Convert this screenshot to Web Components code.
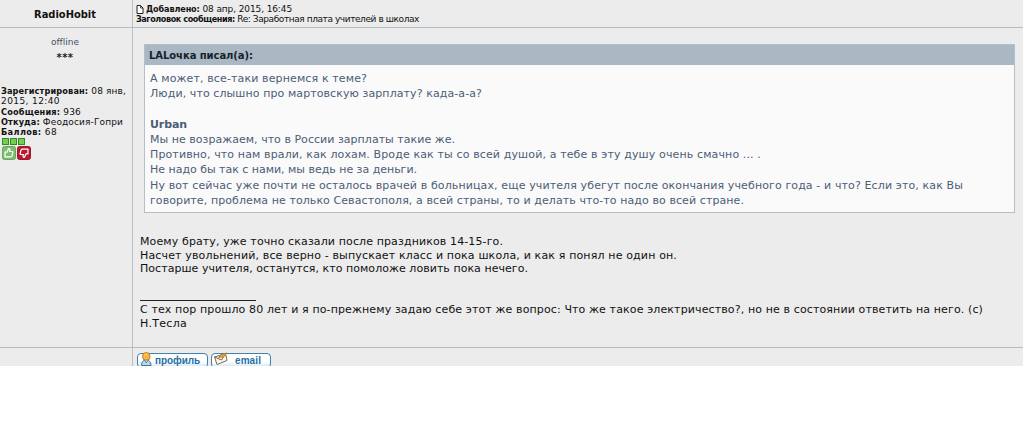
<!DOCTYPE html>
<html lang="ru">
<head>
<meta charset="utf-8">
<title>Заработная плата учителей в школах</title>
<style>
    body { margin: 0; background: #fff; font-family: "DejaVu Sans", Verdana, sans-serif; }
</style>
</head>
<body>
<forum-post>
    <post-author slot="author">RadioHobit</post-author>
    <post-heading slot="heading">
        <text-line width="146" slot="date"><b>Добавлено:</b> 08 апр, 2015, 16:45</text-line>
        <text-line width="283"><b>Заголовок сообщения:</b> Re: Заработная плата учителей в школах</text-line>
    </post-heading>
    <user-details slot="details">
        <text-line width="28" slot="status">offline</text-line>
        <text-line width="17" slot="rank"><b>***</b></text-line>
        <text-line width="125"><b>Зарегистрирован:</b> 08 янв,</text-line>
        <text-line width="59">2015, 12:40</text-line>
        <text-line width="80"><b>Сообщения:</b> 936</text-line>
        <text-line width="122"><b>Откуда:</b> Феодосия-Гопри</text-line>
        <text-line width="56"><b>Баллов:</b> 68</text-line>
    </user-details>
    <quote-box slot="body">
        <text-line width="104" slot="author">LALочка писал(а):</text-line>
        <text-line width="217">А может, все-таки вернемся к теме?</text-line>
        <text-line width="332">Люди, что слышно про мартовскую зарплату? када-а-а?</text-line>
        <text-line></text-line>
        <text-line width="37"><b>Urban</b></text-line>
        <text-line width="305">Мы не возражаем, что в России зарплаты такие же.</text-line>
        <text-line width="611">Противно, что нам врали, как лохам. Вроде как ты со всей душой, а тебе в эту душу очень смачно ... .</text-line>
        <text-line width="267">Не надо бы так с нами, мы ведь не за деньги.</text-line>
        <text-line width="813">Ну вот сейчас уже почти не осталось врачей в больницах, еще учителя убегут после окончания учебного года - и что? Если это, как Вы</text-line>
        <text-line width="594">говорите, проблема не только Севастополя, а всей страны, то и делать что-то надо во всей стране.</text-line>
    </quote-box>
    <post-message slot="body">
        <text-line width="363">Моему брату, уже точно сказали после праздников 14-15-го.</text-line>
        <text-line width="537">Насчет увольнений, все верно - выпускает класс и пока школа, и как я понял не один он.</text-line>
        <text-line width="388">Постарше учителя, останутся, кто помоложе ловить пока нечего.</text-line>
        <text-line width="843" slot="signature">С тех пор прошло 80 лет и я по-прежнему задаю себе этот же вопрос: Что же такое электричество?, но не в состоянии ответить на него. (с)</text-line>
        <text-line width="47" slot="signature">Н.Тесла</text-line>
    </post-message>
    <post-button slot="actions" icon="profile"><text-line width="45">профиль</text-line></post-button>
    <post-button slot="actions" icon="email"><text-line width="26">email</text-line></post-button>
</forum-post>

<script>
const PAGE = '<svg viewBox="0 0 8 9" width="8" height="9"><path d="M1 .5h3.5l2.5 2.5v5.500h-6z" fill="#fff" stroke="#222"/><path d="M4.500.5v2.500h2.500" fill="none" stroke="#222" stroke-width=".8"/></svg>';
const HAND = '<path d="M3 6.200h2l1.500-3.500c1-.4 1.700.3 1.400 1.400l-.4 1.400h2.500c.8 0 1 .6.8 1.200l-.8 3.200c-.2.7-.6.900-1.200.900H3z" fill="none" stroke="#fff" stroke-width="1.2" stroke-linejoin="round"/>';
const THUMB_UP = `<svg viewBox="0 0 14 14" width="14" height="14"><rect x=".5" y=".5" width="13" height="13" rx="2" fill="#7fbe70" stroke="#68a95b"/>${HAND}</svg>`;
const THUMB_DOWN = `<svg viewBox="0 0 14 14" width="14" height="14"><rect x=".5" y=".5" width="13" height="13" rx="2" fill="#b9172c" stroke="#96182a"/><g transform="rotate(180 7 7)">${HAND}</g></svg>`;
const ICONS = {
    profile: '<svg viewBox="0 0 13 14" width="13" height="14"><path d="M1.500 13.500c0-4 2-5.500 4.500-5.500s5 1.500 5 5.500z" fill="#b7d8ea" stroke="#3878a8"/><path d="M5 8l1.200 3L8 8" fill="#fff" stroke="#3878a8" stroke-width=".8"/><rect x="2.800" y=".8" width="7" height="7.200" rx="2.500" fill="#f6b83d" stroke="#bd7b20"/><path d="M4.500 3q1-1 2.500-.8" stroke="#ffe7a0" fill="none"/></svg>',
    email: '<svg viewBox="0 0 16 14" width="16" height="14"><path d="M1.500 5L12.500 1.500l1.500 7L4 12.500z" fill="#fff7e5" stroke="#77685a"/><path d="M1.500 5L8.500 8l4-6.500" fill="none" stroke="#77685a"/><path d="M5.500 5.500l3-3L14 1l-3.500 4z" fill="#eba641" stroke="#9f6928" stroke-width=".7"/></svg>',
};

// One line of text, tracked so that it takes the given number of pixels.
class TextLine extends HTMLElement {
    connectedCallback() {
        if (!this.shadowRoot) {
            this.attachShadow({ mode: 'open' }).innerHTML = `
                <style>
                    :host { display: block; min-height: 1lh; white-space: nowrap; }
                    span { display: inline-block; vertical-align: top; }
                    ::slotted(b) { font-size: var(--bold-size, 1em); }
                </style><span><slot></slot></span>`;
        }
        this.fit();
    }

    fit() {
        const width = Number(this.getAttribute('width'));
        const length = this.textContent.length;
        if (!width || !length) return;
        const span = this.shadowRoot.querySelector('span');
        span.style.letterSpacing = '0px';
        span.style.letterSpacing = `${(width - span.getBoundingClientRect().width) / length}px`;
    }
}

function define(tag, html) {
    customElements.define(tag, class extends HTMLElement {
        constructor() {
            super();
            this.attachShadow({ mode: 'open' }).innerHTML = html;
        }
    });
}

define('forum-post', `
    <style>
        :host {
            display: grid; grid-template-columns: 132px minmax(0, 1fr);
            grid-template-rows: 28px 320px 18px; height: 366px; overflow: hidden;
            background: #ececec; color: #111;
        }
        .cell { box-sizing: border-box; min-width: 0; border-bottom: 1px solid #b4bbc0; }
        .main { border-left: 1px solid #b8c0c6; }
        .body { padding: 16px 8px 0 7px; }
        .foot { border-bottom: 0; }
        .actions { display: flex; align-items: flex-start; gap: 3px; padding: 3px 0 0 4px; }
    </style>
    <div class="cell"><slot name="author"></slot></div>
    <div class="cell main"><slot name="heading"></slot></div>
    <div class="cell"><slot name="details"></slot></div>
    <div class="cell main body"><slot name="body"></slot></div>
    <div class="cell foot"></div>
    <div class="cell main foot actions"><slot name="actions"></slot></div>`);

define('post-author', `
    <style>
        :host { display: block; text-align: center; font: bold 11px/27px "DejaVu Sans Condensed", Tahoma, sans-serif; font-stretch: condensed; padding: 1px 2px 0 0; height: 26px; }
    </style><slot></slot>`);

define('post-heading', `
    <style>
        :host { display: block; padding: 4px 0 0 3px; font-size: 9px; line-height: 10px; --bold-size: 8.1px; }
        .date { display: flex; align-items: center; gap: 2px; height: 10px; }
        svg { display: block; }
    </style>
    <div class="date">${PAGE}<slot name="date"></slot></div><slot></slot>`);

define('user-details', `
    <style>
        :host { display: block; padding: 9px 0 0 1px; font-size: 9px; line-height: 10.250px; --bold-size: 8.2px; }
        .status { display: flex; flex-direction: column; align-items: center; gap: 6px; height: 49px; color: #435066; padding-right: 3px; }
        ::slotted([slot="rank"]) { color: #222; --bold-size: 10px; }
        .score { display: flex; gap: 1px; height: 9px; padding-left: 1px; }
        .score i { box-sizing: border-box; width: 7px; height: 7px; margin-top: 1px; background: #73cf4f; border: 1px solid #338b28; }
        .votes { display: flex; gap: 1px; padding-left: 1px; }
    </style>
    <div class="status"><slot name="status"></slot><slot name="rank"></slot></div>
    <slot></slot>
    <div class="score"><i></i><i></i><i></i></div>
    <div class="votes">${THUMB_UP}${THUMB_DOWN}</div>`);

define('quote-box', `
    <style>
        :host { display: block; box-sizing: border-box; height: 169px; margin-left: 4px; border: 1px solid #b4bfc7; background: #fafafa; }
        .author { height: 20px; background: #a9b8c2; color: #17222b; padding-left: 4px; font: bold 10px/21px "DejaVu Sans", Verdana, sans-serif; }
        .text { padding: 5.700px 0 0 5px; color: #4c5d77; font-size: 11px; line-height: 15.300px; }
    </style>
    <div class="author"><slot name="author"></slot></div>
    <div class="text"><slot></slot></div>`);

define('post-message', `
    <style>
        :host { display: block; padding-top: 22px; font-size: 11px; line-height: 13.500px; }
        hr { width: 116px; height: 1px; margin: 24px 0 2.500px; border: 0; background: #222; }
    </style>
    <slot></slot><hr><slot name="signature"></slot>`);

class PostButton extends HTMLElement {
    constructor() {
        super();
        this.attachShadow({ mode: 'open' });
    }

    connectedCallback() {
        const icon = this.getAttribute('icon');
        this.shadowRoot.innerHTML = `
            <style>
                :host {
                    display: flex; box-sizing: border-box; width: ${icon === 'email' ? 60 : 71}px; height: 15px;
                    margin-top: 2px; border: 1px solid #3e82ad; border-radius: 4px;
                    background: linear-gradient(#fff 60%, #d3e5ef); color: #2670a3;
                    font: bold 10px/14px "Liberation Sans", Arial, sans-serif;
                }
                svg { flex: none; margin: -2px ${icon === 'email' ? 6 : 2}px 0 ${icon === 'email' ? 1 : 2}px; }
            </style>${ICONS[icon]}<slot></slot>`;
    }
}

customElements.define('post-button', PostButton);
customElements.define('text-line', TextLine);
</script>
</body>
</html>
